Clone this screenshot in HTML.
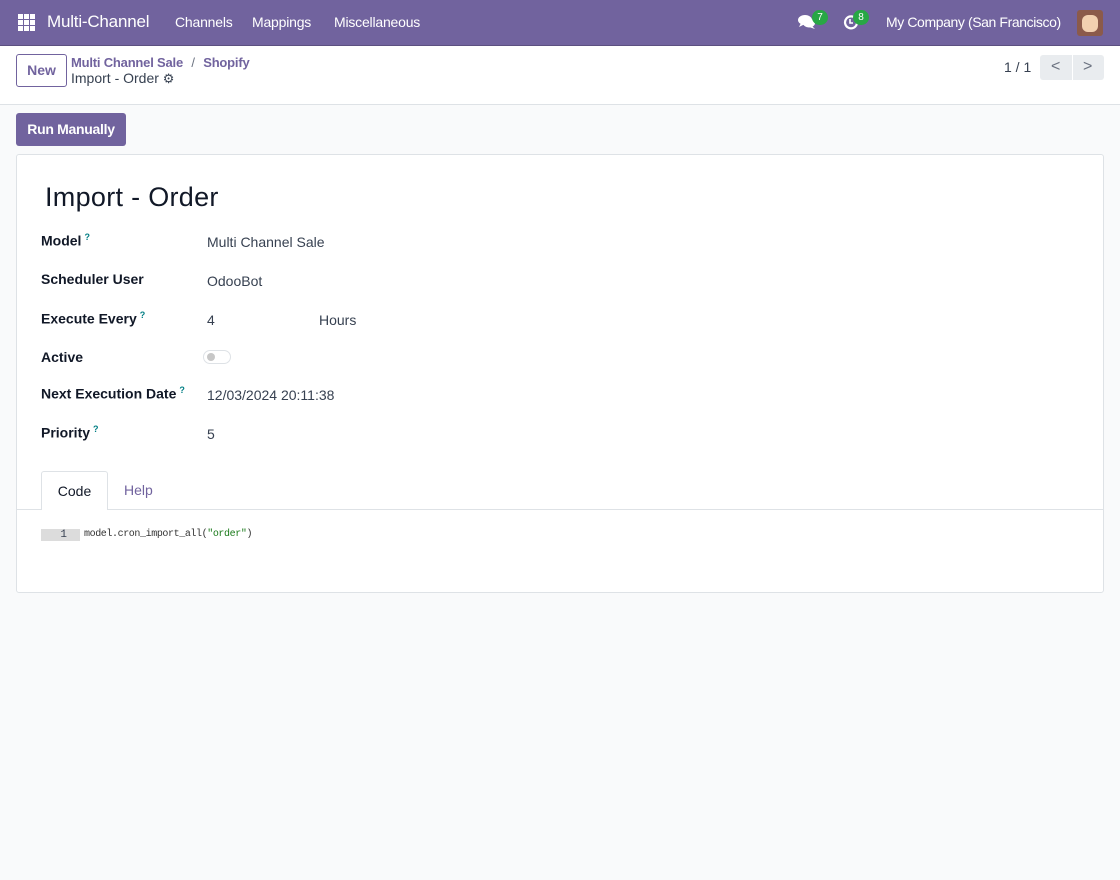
<!DOCTYPE html>
<html><head><style>
*{box-sizing:border-box;margin:0;padding:0}
body{width:1120px;height:880px;background:#f9fafb;font-family:"Liberation Sans",sans-serif;font-size:14px;color:#374151;position:relative;overflow:hidden}
.nav{position:absolute;left:0;top:0;width:1120px;height:46px;background:#71639e;color:#fff;border-bottom:1px solid #5c5080}
.nav span{position:absolute;top:14px;font-size:14px;letter-spacing:-0.2px}
.ctrl{position:absolute;left:0;top:46px;width:1120px;height:59px;background:#fff;border-bottom:1px solid #dee2e6}
.abs{position:absolute}
.lbl{position:absolute;left:41px;font-weight:bold;color:#111827}
.val{position:absolute;left:207px;color:#374151}
sup{color:#017e84;font-size:9px;font-weight:bold;margin-left:3px}
.badge{position:absolute;background:#28a745;color:#fff;font-size:10px;border-radius:8px;width:16px;height:15px;text-align:center;line-height:15px}
</style></head><body>
<div class="nav">
<div class="abs" style="left:18px;top:14px;width:17px;height:17px;display:grid;grid-template-columns:repeat(3,5px);gap:1px">
<i style="background:#fff"></i><i style="background:#fff"></i><i style="background:#fff"></i><i style="background:#fff"></i><i style="background:#fff"></i><i style="background:#fff"></i><i style="background:#fff"></i><i style="background:#fff"></i><i style="background:#fff"></i></div>
<span style="left:47px;top:12px;font-size:17px">Multi-Channel</span>
<span style="left:175px">Channels</span>
<span style="left:252px">Mappings</span>
<span style="left:334px">Miscellaneous</span>
<svg class="abs" style="left:798px;top:14px" width="18" height="16" viewBox="0 0 18 16"><ellipse cx="7" cy="6" rx="7" ry="5" fill="#fff"/><path d="M3 9 L1 13 L7 10Z" fill="#fff"/><ellipse cx="11" cy="9" rx="6" ry="4.5" fill="#fff"/><path d="M14 12 L17 15 L11 13Z" fill="#fff"/></svg>
<div class="badge" style="left:812px;top:10px">7</div>
<svg class="abs" style="left:843px;top:14px" width="16" height="16" viewBox="0 0 16 16"><path d="M13 5 A6 6 0 1 0 14 9" stroke="#fff" stroke-width="2.2" fill="none"/><path d="M7 5 V9 H10" stroke="#fff" stroke-width="1.6" fill="none"/></svg>
<div class="badge" style="left:853px;top:10px">8</div>
<span style="left:886px;letter-spacing:-0.4px">My Company (San Francisco)</span>
<div class="abs" style="left:1077px;top:10px;width:26px;height:26px;background:#8b5a4a;border-radius:3px"><div style="margin:5px 5px;width:16px;height:17px;background:#f2d0b0;border-radius:6px"></div></div>
</div>
<div class="ctrl">
<div class="abs" style="left:16px;top:8px;width:51px;height:33px;border:1px solid #71639e;border-radius:3px;color:#71639e;font-weight:bold;text-align:center;line-height:31px">New</div>
<div class="abs" style="left:71px;top:9px;color:#71639e;font-weight:bold;font-size:13px;letter-spacing:-0.2px">Multi Channel Sale <span style="color:#6b7280;font-weight:normal;margin:0 5px">/</span> Shopify</div>
<div class="abs" style="left:71px;top:24px;color:#374151">Import - Order <span style="font-size:13px">⚙</span></div>
<div class="abs" style="left:1004px;top:13px">1 / 1</div>
<div class="abs" style="left:1040px;top:9px;width:64px;height:25px;background:#e9ecef;border-radius:3px;color:#6b7280;font-size:16px;line-height:24px"><span style="position:absolute;left:11px">&lt;</span><span style="position:absolute;left:32px;top:0;width:1px;height:25px;background:#fff"></span><span style="position:absolute;left:43px">&gt;</span></div>
</div>
<div class="abs" style="left:16px;top:113px;width:110px;height:33px;background:#71639e;color:#fff;font-weight:bold;border-radius:3px;text-align:center;line-height:33px;letter-spacing:-0.3px">Run Manually</div>
<div class="abs" style="left:16px;top:154px;width:1088px;height:439px;background:#fff;border:1px solid #dee2e6;border-radius:3px"></div>
<div class="abs" style="left:45px;top:182px;font-size:27px;color:#111827;letter-spacing:0.3px">Import - Order</div>
<div class="lbl" style="top:232px">Model<sup>?</sup></div><div class="val" style="top:234px">Multi Channel Sale</div>
<div class="lbl" style="top:271px">Scheduler User</div><div class="val" style="top:273px">OdooBot</div>
<div class="lbl" style="top:310px">Execute Every<sup>?</sup></div><div class="val" style="top:312px">4</div><div class="abs" style="left:319px;top:312px">Hours</div>
<div class="lbl" style="top:349px">Active</div>
<div class="abs" style="left:203px;top:350px;width:28px;height:14px;border:1px solid #dee2e6;border-radius:7px"><div style="margin:2px 3px;width:8px;height:8px;background:#c7c7c7;border-radius:50%"></div></div>
<div class="lbl" style="top:385px">Next Execution Date<sup>?</sup></div><div class="val" style="top:387px">12/03/2024 20:11:38</div>
<div class="lbl" style="top:424px">Priority<sup>?</sup></div><div class="val" style="top:426px">5</div>
<div class="abs" style="left:17px;top:509px;width:1086px;height:1px;background:#dee2e6"></div>
<div class="abs" style="left:41px;top:471px;width:67px;height:39px;background:#fff;border:1px solid #dee2e6;border-bottom:none;border-radius:3px 3px 0 0;text-align:center;line-height:38px;color:#111827">Code</div>
<div class="abs" style="left:124px;top:482px;color:#71639e">Help</div>
<div class="abs" style="left:41px;top:529px;width:39px;height:12px;background:#dcdcdc;font-family:'Liberation Mono',monospace;font-size:11px;text-align:right;padding-right:13px;line-height:12px">1</div>
<div class="abs" style="left:84px;top:529px;font-family:'Liberation Mono',monospace;font-size:10px;letter-spacing:-0.4px;color:#333">model.cron_import_all(<span style="color:#1a7a1a">"order"</span>)</div>
</body></html>
